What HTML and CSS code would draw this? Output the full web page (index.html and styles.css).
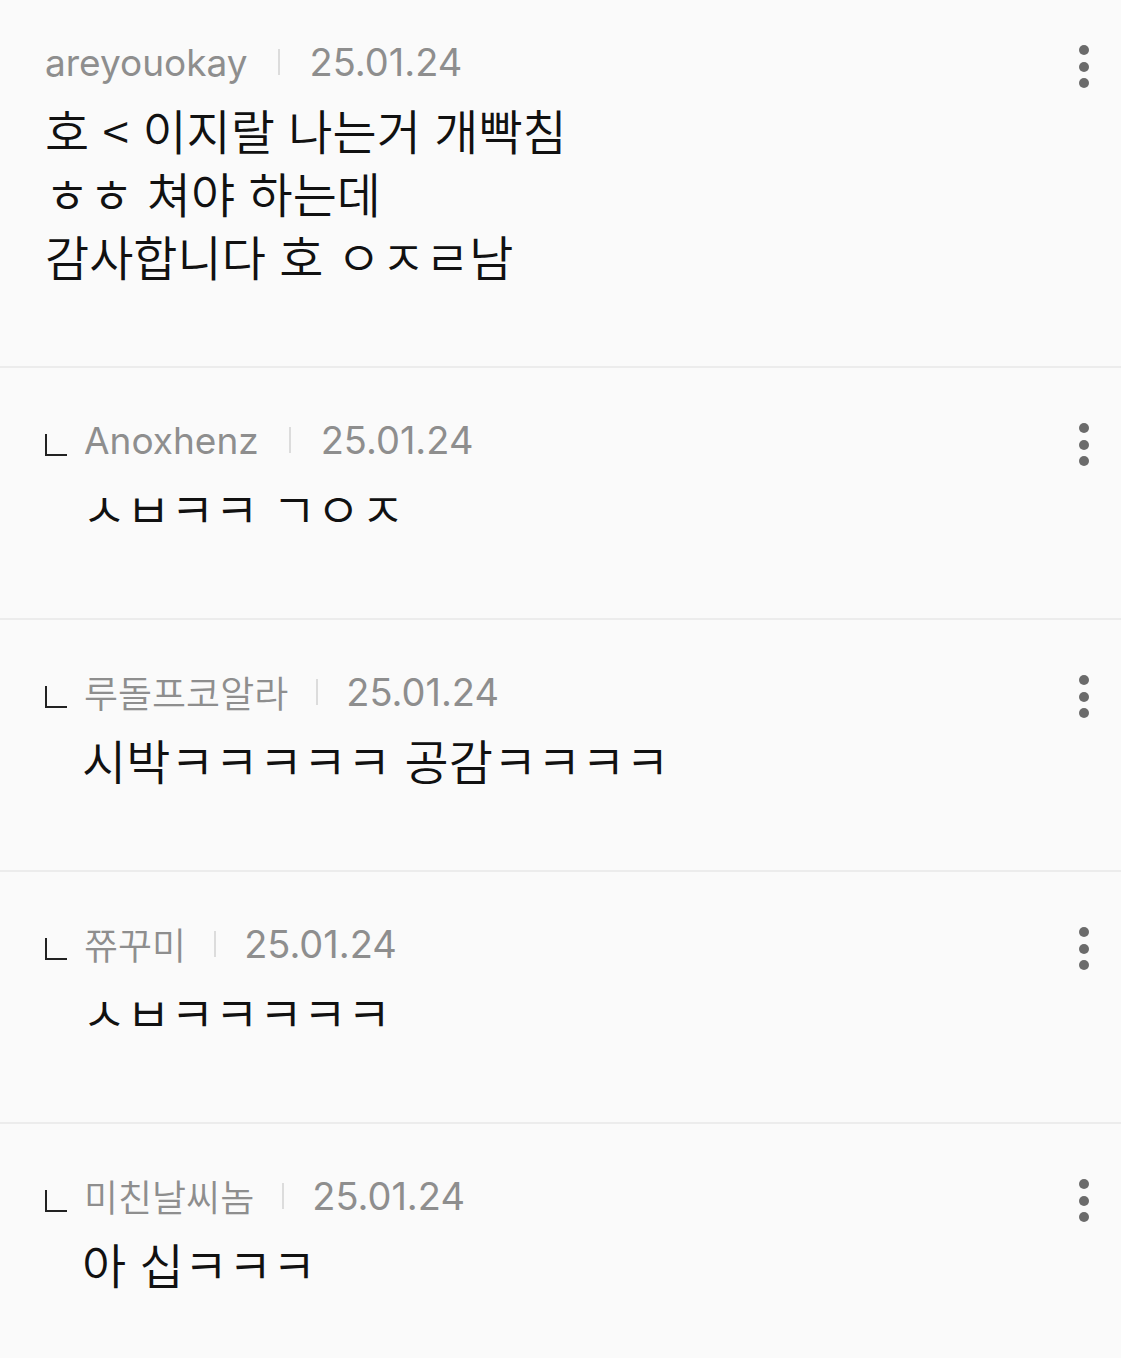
FILE: index.html
```html
<!DOCTYPE html>
<html lang="ko">
<head>
  <meta charset="UTF-8">
  <meta name="viewport" content="width=device-width, initial-scale=1">
  <title>댓글</title>
  <link rel="stylesheet" href="styles.css">
</head>
<body>
  <ul class="comments">
    <li class="comment">
      <div class="comment-main">
        <div class="meta">
          <span class="author">areyouokay</span>
          <span class="sep"></span>
          <span class="date">25.01.24</span>
        </div>
        <p class="text">호 &lt; 이지랄 나는거 개빡침<br>ㅎㅎ 쳐야 하는데<br>감사합니다 호 ㅇㅈㄹ남</p>
      </div>
      <button class="more" aria-label="더보기"><i></i><i></i><i></i></button>
    </li>
    <li class="comment reply">
      <div class="comment-main">
        <div class="meta">
          <span class="reply-mark"></span>
          <span class="author">Anoxhenz</span>
          <span class="sep"></span>
          <span class="date">25.01.24</span>
        </div>
        <p class="text">ㅅㅂㅋㅋ ㄱㅇㅈ</p>
      </div>
      <button class="more" aria-label="더보기"><i></i><i></i><i></i></button>
    </li>
    <li class="comment reply">
      <div class="comment-main">
        <div class="meta">
          <span class="reply-mark"></span>
          <span class="author ko">루돌프코알라</span>
          <span class="sep"></span>
          <span class="date">25.01.24</span>
        </div>
        <p class="text">시박ㅋㅋㅋㅋㅋ 공감ㅋㅋㅋㅋ</p>
      </div>
      <button class="more" aria-label="더보기"><i></i><i></i><i></i></button>
    </li>
    <li class="comment reply">
      <div class="comment-main">
        <div class="meta">
          <span class="reply-mark"></span>
          <span class="author ko">쮸꾸미</span>
          <span class="sep"></span>
          <span class="date">25.01.24</span>
        </div>
        <p class="text">ㅅㅂㅋㅋㅋㅋㅋ</p>
      </div>
      <button class="more" aria-label="더보기"><i></i><i></i><i></i></button>
    </li>
    <li class="comment reply">
      <div class="comment-main">
        <div class="meta">
          <span class="reply-mark"></span>
          <span class="author ko">미친날씨놈</span>
          <span class="sep"></span>
          <span class="date">25.01.24</span>
        </div>
        <p class="text">아 십ㅋㅋㅋ</p>
      </div>
      <button class="more" aria-label="더보기"><i></i><i></i><i></i></button>
    </li>
  </ul>
</body>
</html>
```

FILE: styles.css
```css
/* 댓글 목록 */
html, body {
  height: 100%;
  overflow: hidden;
}
body {
  margin: 0;
  background: #fafafa;
  font-family: Inter, "Noto Sans CJK KR", sans-serif;
  color: #111;
}
.comments {
  list-style: none;
  margin: 0;
  padding: 0;
}
.comment {
  display: flex;
  align-items: flex-start;
  padding: 47px 32px 79px 45px;
  border-bottom: 2px solid #ececec;
}
.comment:first-child {
  padding-top: 37px;
  padding-bottom: 79px;
}
.comment:last-child {
  border-bottom: none;
}
.comment-main {
  flex: 1;
}
.meta {
  display: flex;
  align-items: center;
  height: 50px;
  font-size: 37px;
  color: #8e8e8e;
}
.date {
  font-size: 38px;
}
.reply-mark {
  width: 20px;
  height: 20px;
  margin: 10px 17px 0 0;
  border-left: 2px solid #222;
  border-bottom: 2px solid #222;
}
.author.ko {
  font-family: "Noto Sans CJK KR", sans-serif;
  font-weight: 350;
}
.sep {
  width: 2px;
  height: 26px;
  margin: 0 30px;
  background: #dcdcdc;
}
.reply .author.ko + .sep {
  margin: 0 28px 0 28px;
}
.text {
  margin: 11px 0 0;
  font-family: "Noto Sans CJK KR", sans-serif;
  font-weight: 350;
  font-size: 48px;
  line-height: 63px;
  height: auto;
  color: #111;
}
.reply .text {
  padding-left: 37px;
}
.more {
  display: flex;
  flex-direction: column;
  gap: 6.5px;
  margin-top: 8px;
  padding: 0;
  border: none;
  background: none;
  cursor: pointer;
}
.more i {
  width: 10px;
  height: 10px;
  border-radius: 50%;
  background: #6b6b6b;
}
```
